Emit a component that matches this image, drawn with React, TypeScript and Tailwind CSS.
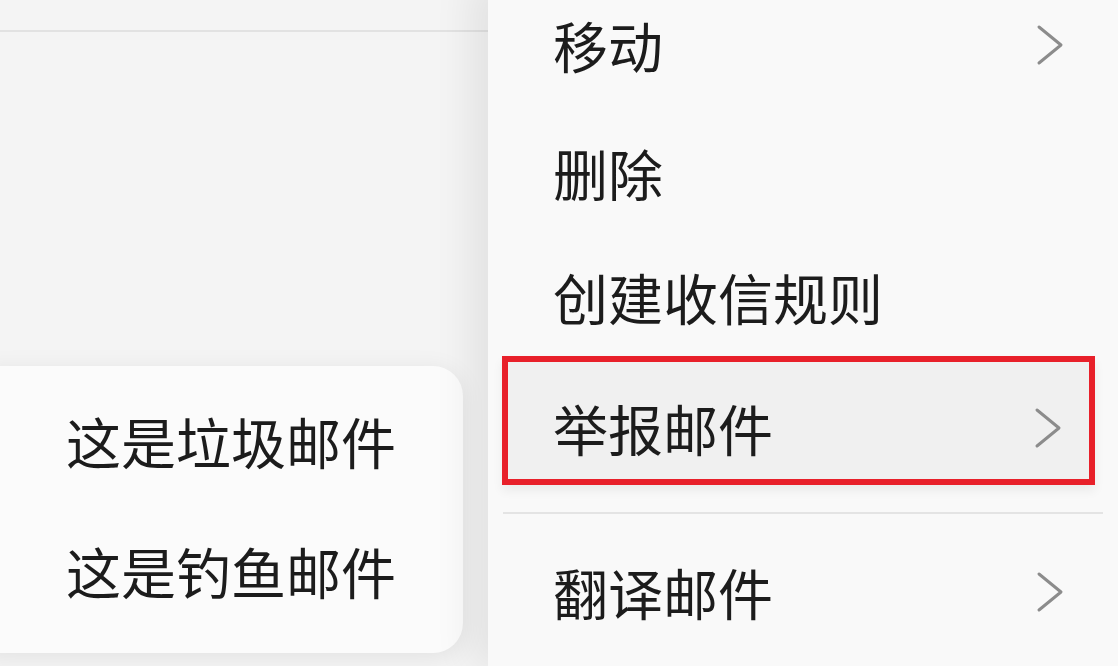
import React from 'react';

function Chevron() {
  return (
    <svg width="28" height="42" viewBox="0 0 28 42" fill="none" className="shrink-0">
      <polyline
        points="3,3 25,21 3,39"
        stroke="#8c8c8c"
        strokeWidth="3"
        strokeLinecap="round"
        strokeLinejoin="round"
      />
    </svg>
  );
}

const font = { fontFamily: '"Noto Sans CJK SC", "Noto Sans", sans-serif' };

export default function App() {
  return (
    <div
      className="w-[1118px] h-[666px] overflow-hidden flex bg-[#f4f4f4] text-[#1c1c1c]"
      style={font}
    >
      {/* left side: dimmed mail list + submenu */}
      <div className="w-[488px] shrink-0 flex flex-col">
        <div className="mt-[30px] h-[2px] bg-[#e2e2e2]" />
        <div className="mt-auto mb-[13px] -ml-[30px] w-[493px] h-[287px] bg-[#fbfbfb] rounded-[30px] shadow-[0_4px_24px_rgba(0,0,0,0.08)] flex flex-col pl-[96px] pt-[46px] gap-[74px]">
          <div className="text-[55px] leading-[56px]">这是垃圾邮件</div>
          <div className="text-[55px] leading-[56px]">这是钓鱼邮件</div>
        </div>
      </div>

      {/* right side: context menu */}
      <div className="relative z-10 flex-1 bg-[#f9f9f9] shadow-[-18px_0_36px_rgba(0,0,0,0.07)] flex flex-col -mt-[19px]">
        <div className="h-[127px] shrink-0 flex items-center justify-between pl-[65px] pr-[54px]">
          <span className="text-[55px] leading-none">移动</span>
          <Chevron />
        </div>
        <div className="h-[129px] shrink-0 flex items-center pl-[65px]">
          <span className="text-[55px] leading-none">删除</span>
        </div>
        <div className="h-[119px] shrink-0 flex items-center pl-[65px]">
          <span className="text-[55px] leading-none">创建收信规则</span>
        </div>
        <div className="ml-[14px] mr-[23px] h-[129px] shrink-0 border-[6px] border-[#e8202a] bg-[#f0f0f0] shadow-[0_6px_10px_rgba(0,0,0,0.06)] flex items-center justify-between pl-[45px] pr-[27px] pt-[14px]">
          <span className="text-[55px] leading-none">举报邮件</span>
          <Chevron />
        </div>
        <div className="mt-[27px] ml-[15px] mr-[15px] h-[2px] bg-[#e4e4e4] shrink-0" />
        <div className="h-[155px] shrink-0 flex items-center justify-between pl-[65px] pr-[54px]">
          <span className="text-[55px] leading-none">翻译邮件</span>
          <Chevron />
        </div>
      </div>
    </div>
  );
}
